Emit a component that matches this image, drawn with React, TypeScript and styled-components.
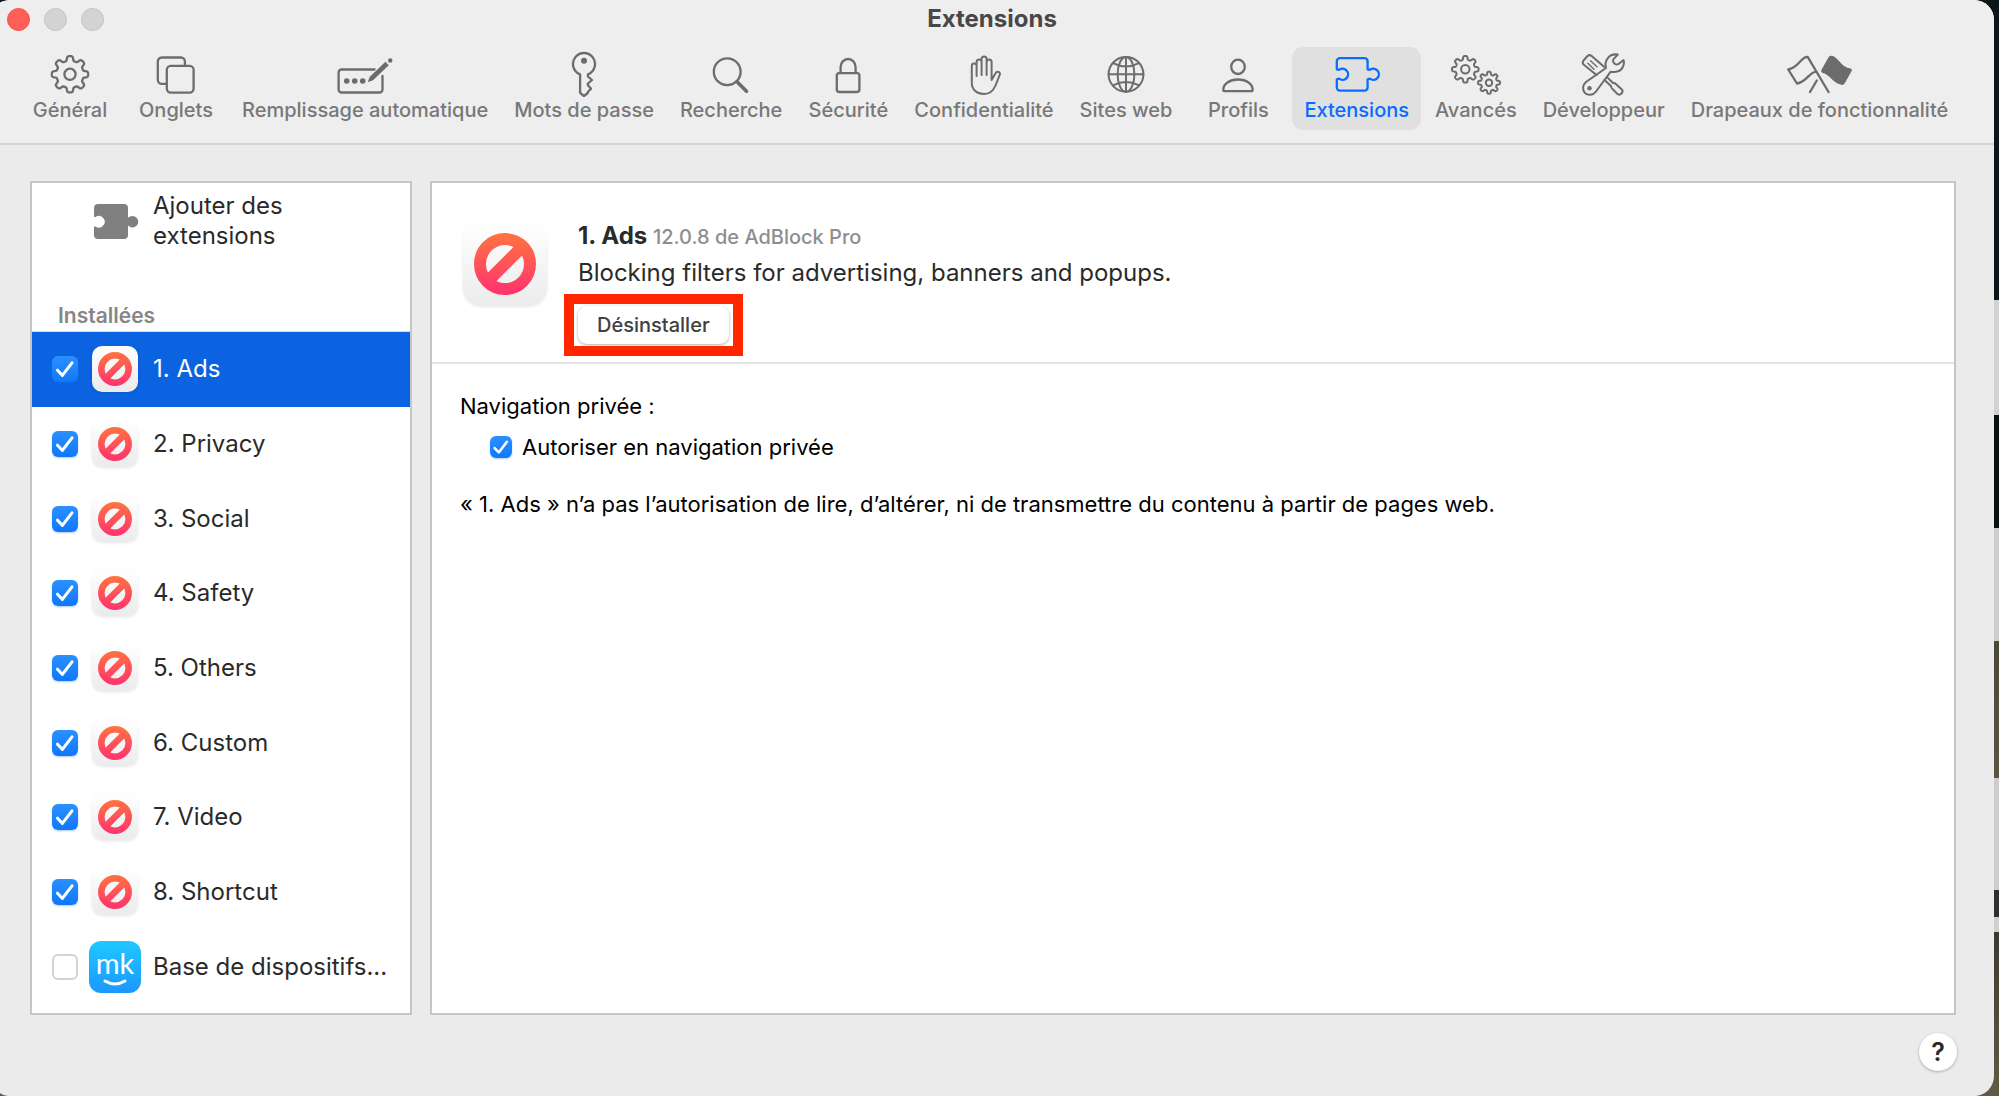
import React, { useState } from "react";
import styled, { createGlobalStyle, css } from "styled-components";

const GlobalStyle = createGlobalStyle`
  *, *::before, *::after { box-sizing: border-box; }
  body {
    margin: 0;
    font-family: Inter, "Liberation Sans", sans-serif;
    -webkit-font-smoothing: antialiased;
  }
  button { font-family: inherit; }
`;

const checkMark =
  "url(\"data:image/svg+xml,%3Csvg xmlns='http://www.w3.org/2000/svg' viewBox='0 0 26 26'%3E%3Cpath d='M5.5 14.2L10.4 19.4L20 6.8' fill='none' stroke='white' stroke-width='3' stroke-linecap='round' stroke-linejoin='round'/%3E%3C/svg%3E\")";

/* ---------- Layout ---------- */

const Desktop = styled.div`
  display: flex;
  min-height: 100vh;
  padding-right: 5px;
  overflow: hidden;
  background: linear-gradient(
    #0b1618 27.4%,
    #d2d2d2 27.4% 37.9%,
    #08120f 37.9% 48.2%,
    #cecece 48.2% 58.5%,
    #4a4838 58.5%,
    #5a5643 71%,
    #cdcdcd 71% 81.2%,
    #2d3033 81.2% 83.7%,
    #d0d0d0 83.7% 85%,
    #3c3a30 85%,
    #625c46 100%
  );
`;

const Window = styled.div`
  flex: 1;
  display: flex;
  flex-direction: column;
  margin-left: -10px;
  border-radius: 20px;
  overflow: hidden;
  background: #ebebeb;
`;

const TopBar = styled.header`
  background: #eeeeee;
  border-bottom: 2px solid #d4d4d4;
`;

const TitleBar = styled.div`
  display: grid;
  grid-template-columns: 1fr auto 1fr;
  align-items: center;
  height: 38px;
  margin-bottom: 9px;
  padding: 0 17px;
`;

const Lights = styled.div`
  display: flex;
  gap: 14px;
`;

const Light = styled.button<{ $on?: boolean }>`
  width: 23px;
  height: 23px;
  padding: 0;
  border-radius: 50%;
  border: 1px solid ${(p) => (p.$on ? "#f2564d" : "#c3c3c3")};
  background: ${(p) => (p.$on ? "#ff5f57" : "#d3d3d3")};
`;

const Title = styled.h1`
  margin: 0;
  font-size: 24px;
  line-height: 38px;
  font-weight: 700;
  color: #484848;
`;

const Toolbar = styled.nav`
  display: flex;
  gap: 2px;
  height: 96px;
  padding-left: 28px;
`;

const Tab = styled.button<{ $active?: boolean }>`
  display: flex;
  flex-direction: column;
  align-items: center;
  flex: none;
  min-width: 104px;
  height: 83px;
  padding: 4px 12px 0;
  border: 0;
  border-radius: 11px;
  background: ${(p) => (p.$active ? "#e0e0e0" : "transparent")};
  color: ${(p) => (p.$active ? "#0a6cff" : "#787878")};
  font-size: 20px;
  line-height: 26px;
  font-weight: 500;
  white-space: nowrap;
`;

const Glyph = styled.svg<{ $active?: boolean }>`
  display: block;
  width: 72px;
  height: 46px;
  color: ${(p) => (p.$active ? "#0a6cff" : "#6c6c6c")};
  fill: none;
  stroke: currentColor;
  stroke-width: 2.3px;
  stroke-linecap: round;
  stroke-linejoin: round;
`;

const Content = styled.main`
  flex: 1;
  display: flex;
  gap: 18px;
  padding: 36px 38px 0 40px;
`;

const Panel = styled.section`
  display: flex;
  flex-direction: column;
  border: 2px solid #c6c6c6;
  background: #ffffff;
`;

const Sidebar = styled(Panel)`
  flex: none;
  width: 382px;
`;

const Detail = styled(Panel)`
  flex: 1;
`;

const BottomBar = styled.footer`
  display: flex;
  justify-content: flex-end;
  padding: 18px 37px 25px;
`;

const HelpButton = styled.button`
  width: 38px;
  height: 38px;
  padding: 0;
  border: 0;
  border-radius: 50%;
  background: #ffffff;
  box-shadow: 0 1px 3px rgba(0, 0, 0, 0.28);
  color: #2a2a2a;
  font-size: 25px;
  line-height: 38px;
  font-weight: 600;
`;

/* ---------- Sidebar ---------- */

const AddButton = styled.button`
  display: flex;
  align-items: center;
  gap: 12px;
  margin-bottom: 52px;
  padding: 8px 90px 0 57px;
  border: 0;
  background: none;
  color: #2a2a2a;
  font-size: 24px;
  line-height: 30px;
  text-align: left;
`;

const AddGlyph = styled.svg`
  flex: none;
  width: 52px;
  height: 38px;
  fill: #808080;
`;

const GroupTitle = styled.h2`
  margin: 0;
  padding: 0 26px 2px;
  border-bottom: 1px solid #dcdcdc;
  font-size: 21px;
  line-height: 26px;
  font-weight: 600;
  color: #868686;
`;

const List = styled.ul`
  flex: 1;
  display: grid;
  grid-auto-rows: 1fr;
  margin: 0;
  padding: 0 0 9px;
  list-style: none;
`;

const Row = styled.li<{ $selected?: boolean }>`
  display: flex;
  align-items: center;
  min-height: 60px;
  padding: 0 20px;
  background: ${(p) => (p.$selected ? "#0b63e1" : "transparent")};
  color: ${(p) => (p.$selected ? "#ffffff" : "#2a2a2a")};
`;

const RowLabel = styled.label`
  flex: 1;
  display: flex;
  align-items: center;
  gap: 12px;
  padding-left: 11px;
  font-size: 24px;
  line-height: 30px;
  white-space: nowrap;
`;

const IconSlot = styled.span`
  flex: none;
  display: flex;
  justify-content: center;
  width: 52px;
`;

const Checkbox = styled.input<{ $size: number }>`
  appearance: none;
  flex: none;
  width: ${(p) => p.$size}px;
  height: ${(p) => p.$size}px;
  margin: 0;
  border: 2px solid #d3d3d3;
  border-radius: 6px;
  background: #ffffff;
  &:checked {
    border: 0;
    background: ${checkMark} center / contain no-repeat,
      linear-gradient(#2b90ff, #0f78fb);
    box-shadow: 0 1px 2px rgba(15, 110, 240, 0.35);
  }
`;

const tile = css`
  display: block;
  flex: none;
`;

const AdTile = styled.svg<{ $size: number }>`
  ${tile}
  width: ${(p) => p.$size}px;
  height: ${(p) => p.$size}px;
  border-radius: 22%;
  background: linear-gradient(#ffffff, #ebebeb);
  box-shadow: 0 1px 3px rgba(0, 0, 0, 0.1);
`;

const MkTile = styled.svg`
  ${tile}
  width: 52px;
  height: 52px;
  font-family: Lato, Inter, sans-serif;
  font-size: 29px;
`;

/* ---------- Detail ---------- */

const Summary = styled.div`
  display: flex;
  align-items: flex-start;
  gap: 31px;
  padding: 39px 31px 18px;
  border-bottom: 2px solid #e4e4e4;
`;

const SummaryText = styled.div`
  display: flex;
  flex-direction: column;
  align-items: flex-start;
  color: #2a2a2a;
`;

const Heading = styled.h2`
  margin: 0;
  font-size: 24px;
  line-height: 28px;
  font-weight: 700;
`;

const Version = styled.span`
  font-size: 20px;
  font-weight: 500;
  color: #8e8e8e;
`;

const Description = styled.p`
  margin: 3px 0 14px;
  font-size: 24px;
  line-height: 38px;
`;

const Highlight = styled.div`
  position: relative;
  &::after {
    content: "";
    position: absolute;
    inset: -12px -14px;
    border: 10px solid #ff2600;
    pointer-events: none;
  }
`;

const UninstallButton = styled.button`
  display: block;
  height: 38px;
  padding: 0 19px;
  border: 0;
  border-radius: 9px;
  background: #ffffff;
  box-shadow: 0 1px 3px rgba(0, 0, 0, 0.32);
  color: #404040;
  font-size: 20px;
  line-height: 38px;
  font-weight: 500;
`;

const Settings = styled.div`
  padding: 26px 28px;
  color: #000000;
  font-size: 22px;
  line-height: 32px;
`;

const Paragraph = styled.p`
  margin: 0;
`;

const Option = styled.div`
  display: flex;
  align-items: center;
  gap: 10px;
  margin: 9px 0 25px 30px;
`;

/* ---------- Drawings ---------- */

function gearPath(cx: number, cy: number, radius: number, depth: number) {
  const steps = 192;
  let d = "";
  for (let i = 0; i < steps; i++) {
    const a = (i / steps) * Math.PI * 2;
    const r = radius - depth / 2 + (depth / 2) * Math.tanh(2.4 * Math.cos(8 * a));
    const x = cx + r * Math.sin(a);
    const y = cy - r * Math.cos(a);
    d += `${i ? "L" : "M"}${x.toFixed(2)} ${y.toFixed(2)}`;
  }
  return d + "Z";
}

const glyphs: Record<string, React.ReactNode> = {
  gear: (
    <>
      <path d={gearPath(0, 23.3, 18.2, 4.6)} />
      <circle cx="0" cy="23.3" r="5.6" />
    </>
  ),
  tabs: (
    <>
      <path d="M8.9 14.5V10.5a4 4 0 0 0-4-4H-14.2a4 4 0 0 0-4 4V28.8a4 4 0 0 0 4 4h4.5" />
      <rect x="-9.2" y="14.8" width="26.8" height="26.8" rx="4" />
    </>
  ),
  autofill: (
    <>
      <path d="M9.5 18.5H-23.4a3 3 0 0 0-3 3V38.5a3 3 0 0 0 3 3H14.5a3 3 0 0 0 3-3V25" />
      <g fill="currentColor" stroke="none">
        <circle cx="-18.3" cy="30" r="2.8" />
        <circle cx="-10.3" cy="30" r="2.8" />
        <circle cx="-2.3" cy="30" r="2.8" />
        <circle cx="25.2" cy="9.5" r="2.2" />
        <path d="M2.8 31.2L4.6 26L20.4 10.8L23.8 14.2L8 29.2Z" />
      </g>
    </>
  ),
  key: (
    <>
      <path d="M-3.9 23.3A11 11 0 1 1 3.9 23.3V25.5L8 29L3.8 32.6V34L7 37.8L3.8 41V42L0 45L-3.9 41.8Z" />
      <circle cx="0" cy="9.7" r="3" fill="currentColor" stroke="none" />
    </>
  ),
  search: (
    <>
      <circle cx="-3.8" cy="20.7" r="13.4" />
      <path d="M6 30.7L15.5 40.2" strokeWidth="3.6" />
    </>
  ),
  lock: (
    <>
      <rect x="-11.2" y="22.2" width="22.6" height="18.8" rx="2.4" />
      <path d="M-7.4 22V16a7.5 8 0 0 1 15 0V22" />
    </>
  ),
  hand: (
    <path
      strokeWidth="2"
      d="M-12.2 32V15a2.4 2.4 0 0 1 4.8 0V25M-7.4 15V11a2.5 2.5 0 0 1 5 0V24M-2.4 11V8a2.5 2.5 0 0 1 5 0V24M2.6 11a2.5 2.5 0 0 1 5 0V29L11.4 22.5c1.6-3 5.4-1.6 4.4 1.2L11.5 34.5C9 40.5 5 43 0 43C-7 43-12.2 38.5-12.2 32"
    />
  ),
  globe: (
    <g strokeWidth="2">
      <circle cx="0" cy="23.3" r="17.4" />
      <ellipse cx="0" cy="23.3" rx="8.4" ry="17.4" />
      <path d="M0 6V40.6M-17.4 23.3H17.4M-13 12.2Q0 18.8 13 12.2M-13 34.4Q0 27.8 13 34.4" />
    </g>
  ),
  person: (
    <>
      <ellipse cx="0" cy="15.8" rx="6.8" ry="7.2" />
      <path d="M-14.7 38.5C-14.7 33-8.5 28.5 0 28.5S14.6 33 14.6 38.5Q14.6 40.2 13 40.2H-13Q-14.7 40.2-14.7 38.5Z" />
    </>
  ),
  puzzle: (
    <path d="M-17.2 7.2H7.6a3 3 0 0 1 3 3V18.3L12.8 18.9A5.6 5.6 0 1 1 12.8 27.7L10.6 28.3V36.6a3 3 0 0 1-3 3H-17.2a3 3 0 0 1-3-3V28.3L-18 27.7A5.6 5.6 0 1 0-18 18.9L-20.2 18.3V10.2a3 3 0 0 1 3-3Z" />
  ),
  gears: (
    <g strokeWidth="2">
      <path d={gearPath(-10.7, 18.3, 13.3, 3.6)} />
      <circle cx="-10.7" cy="18.3" r="4.2" />
      <path d={gearPath(13, 31.7, 11, 3)} />
      <circle cx="13" cy="31.7" r="3.2" />
    </g>
  ),
  tools: (
    <g strokeWidth="2">
      <path d="M13.8 3.6L9.3 8.4Q8.6 10 9.5 11.5L11 13Q12.5 14 14.2 13.2L19.6 9C21 15 17.5 20 12 20.8Q9 21.2 6.5 20.8L-8 40.5C-11 44.5-16 44.8-19 42C-22 38.8-21.5 34-18 31L2 17C0 10 5 2 13.8 3.6Z" />
      <path d="M-7.5 24L-20.5 13.5Q-22 11.5-20.5 9.5L-16.5 5Q-14.5 3.2-12.3 5L0 15.8" />
      <path strokeWidth="1.4" d="M-16.2 12.3L-10 18.3M-13.5 9.7L-7 15.7" />
      <path d="M0.5 29L7 35Q7 37 9 38.5L13.5 43Q15.5 44.5 17.5 42.5Q19.5 40.5 17.8 38.5L13 34Q11 31.5 9 32L3.5 26.6" />
      <circle cx="-14.5" cy="37.3" r="2.2" fill="currentColor" stroke="none" />
    </g>
  ),
  flags: (
    <>
      <path d="M-2.8 20.6C-10 21-12 31-22 32.5L-30.8 18.5C-20 16.5-18 5.2-11.3 5.8L9.5 41M-2.2 29.5L-9 41" />
      <path
        fill="currentColor"
        stroke="none"
        d="M10 5.5Q12 4 14.5 5.2C20 8 23 16.5 31.5 17.4Q33.6 18 32.6 20L25.8 32.2Q24.6 34.4 22.3 33.8C13 31.5 11 23.5 3.6 22Q1.4 21 2.3 19Z"
      />
    </>
  ),
};

const tabs = [
  ["Général", "gear"],
  ["Onglets", "tabs"],
  ["Remplissage automatique", "autofill"],
  ["Mots de passe", "key"],
  ["Recherche", "search"],
  ["Sécurité", "lock"],
  ["Confidentialité", "hand"],
  ["Sites web", "globe"],
  ["Profils", "person"],
  ["Extensions", "puzzle"],
  ["Avancés", "gears"],
  ["Développeur", "tools"],
  ["Drapeaux de fonctionnalité", "flags"],
];

const blockers = [
  "1. Ads",
  "2. Privacy",
  "3. Social",
  "4. Safety",
  "5. Others",
  "6. Custom",
  "7. Video",
  "8. Shortcut",
];

function AdIcon({ size, id }: { size: number; id: string }) {
  return (
    <AdTile $size={size} viewBox="0 0 84 84" aria-hidden="true">
      <defs>
        <linearGradient id={id} gradientUnits="userSpaceOnUse" x1="0" y1="11" x2="0" y2="73">
          <stop offset="0" stopColor="#ff7440" />
          <stop offset="1" stopColor="#ff3270" />
        </linearGradient>
      </defs>
      <g fill="none" stroke={`url(#${id})`} strokeWidth="12">
        <circle cx="42" cy="42" r="25" />
        <path d="M24.5 59.5L59.5 24.5" />
      </g>
    </AdTile>
  );
}

function MkIcon() {
  return (
    <MkTile viewBox="0 0 52 52" aria-hidden="true">
      <defs>
        <linearGradient id="mk-sky" x1="0" y1="0" x2="0" y2="1">
          <stop offset="0" stopColor="#1fc8ff" />
          <stop offset="1" stopColor="#1b98fd" />
        </linearGradient>
      </defs>
      <rect width="52" height="52" rx="12" fill="url(#mk-sky)" />
      <text x="26" y="33" textAnchor="middle" fill="#ffffff">
        mk
      </text>
      <path d="M16 40Q26 46 36 40" fill="none" stroke="#ffffff" strokeWidth="3" strokeLinecap="round" />
    </MkTile>
  );
}

export default function App() {
  const [enabled, setEnabled] = useState<boolean[]>(blockers.map(() => true));
  const [base, setBase] = useState(false);
  const [priv, setPriv] = useState(true);

  return (
    <>
      <GlobalStyle />
      <Desktop>
        <Window>
          <TopBar>
            <TitleBar>
              <Lights>
                <Light $on aria-label="Fermer" />
                <Light aria-label="Réduire" />
                <Light aria-label="Agrandir" />
              </Lights>
              <Title>Extensions</Title>
            </TitleBar>
            <Toolbar>
              {tabs.map(([label, icon]) => (
                <Tab key={icon} $active={icon === "puzzle"}>
                  <Glyph $active={icon === "puzzle"} viewBox="-36 0 72 46" aria-hidden="true">
                    {glyphs[icon]}
                  </Glyph>
                  {label}
                </Tab>
              ))}
            </Toolbar>
          </TopBar>
          <Content>
            <Sidebar>
              <AddButton>
                <AddGlyph viewBox="0 0 52 38" aria-hidden="true">
                  <path d="M9 2H35a4 4 0 0 1 4 4V15.5Q41 14 43.5 14A5.6 5.6 0 0 1 43.5 25.5Q41 25.5 39 23.5V33a4 4 0 0 1-4 4H9a4 4 0 0 1-4-4V24.5H6.5A5.8 5.8 0 1 0 6.5 15H5V6a4 4 0 0 1 4-4Z" />
                </AddGlyph>
                Ajouter des extensions
              </AddButton>
              <GroupTitle>Installées</GroupTitle>
              <List>
                {blockers.map((name, i) => (
                  <Row key={name} $selected={i === 0}>
                    <Checkbox
                      id={`ext-${i}`}
                      type="checkbox"
                      $size={26}
                      checked={enabled[i]}
                      onChange={() => setEnabled(enabled.map((v, j) => (j === i ? !v : v)))}
                    />
                    <RowLabel htmlFor={`ext-${i}`}>
                      <IconSlot>
                        <AdIcon size={46} id={`ad-fill-${i}`} />
                      </IconSlot>
                      {name}
                    </RowLabel>
                  </Row>
                ))}
                <Row>
                  <Checkbox id="ext-base" type="checkbox" $size={26} checked={base} onChange={() => setBase(!base)} />
                  <RowLabel htmlFor="ext-base">
                    <IconSlot>
                      <MkIcon />
                    </IconSlot>
                    Base de dispositifs...
                  </RowLabel>
                </Row>
              </List>
            </Sidebar>
            <Detail>
              <Summary>
                <AdIcon size={84} id="ad-fill-large" />
                <SummaryText>
                  <Heading>
                    1. Ads <Version>12.0.8 de AdBlock Pro</Version>
                  </Heading>
                  <Description>Blocking filters for advertising, banners and popups.</Description>
                  <Highlight>
                    <UninstallButton>Désinstaller</UninstallButton>
                  </Highlight>
                </SummaryText>
              </Summary>
              <Settings>
                <Paragraph>Navigation privée :</Paragraph>
                <Option>
                  <Checkbox id="private" type="checkbox" $size={22} checked={priv} onChange={() => setPriv(!priv)} />
                  <label htmlFor="private">Autoriser en navigation privée</label>
                </Option>
                <Paragraph>
                  « 1. Ads » n’a pas l’autorisation de lire, d’altérer, ni de transmettre du contenu à partir de pages
                  web.
                </Paragraph>
              </Settings>
            </Detail>
          </Content>
          <BottomBar>
            <HelpButton aria-label="Aide">?</HelpButton>
          </BottomBar>
        </Window>
      </Desktop>
    </>
  );
}
